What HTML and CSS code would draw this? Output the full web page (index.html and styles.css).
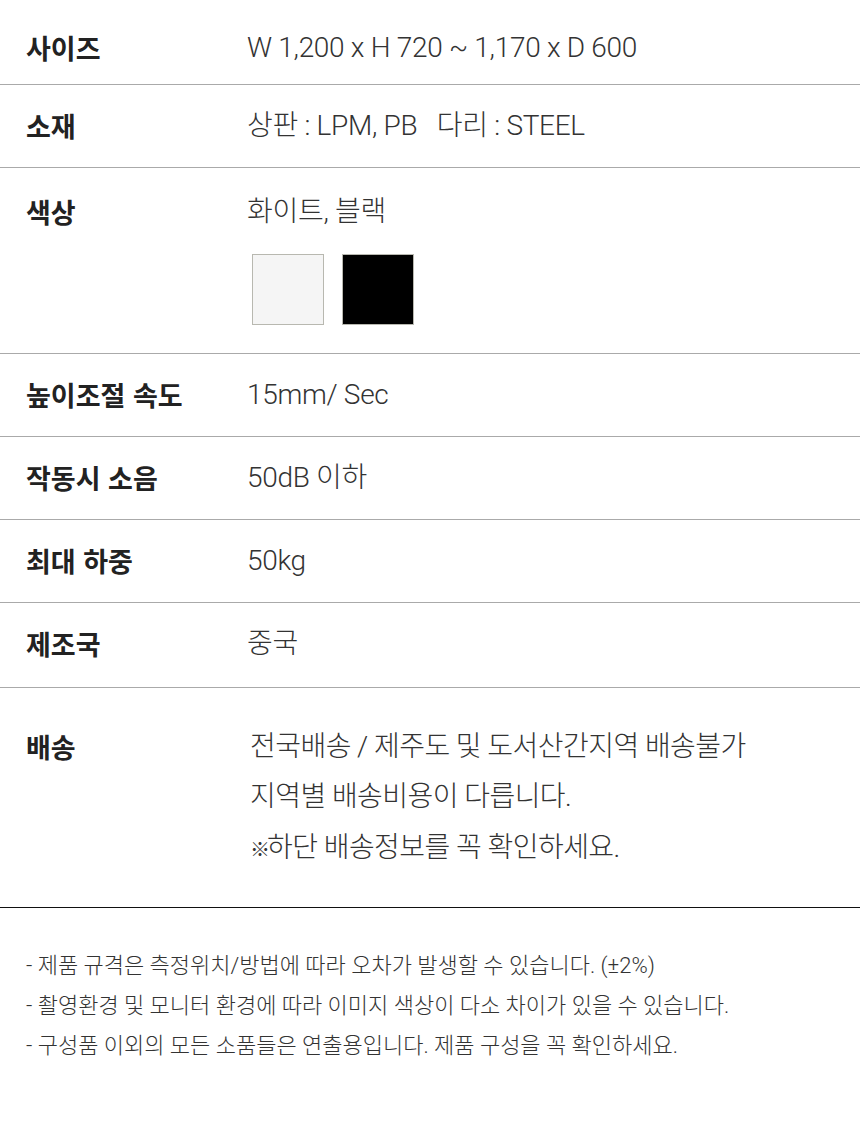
FILE: index.html
```html
<!DOCTYPE html>
<html lang="ko">
<head>
    <meta charset="utf-8">
    <title>제품 정보</title>
    <link rel="stylesheet" href="styles.css">
</head>
<body>
    <div class="spec">
        <div class="spec-row first">
            <div class="spec-label">사이즈</div>
            <div class="spec-value">W 1,200 x H 720 ~ 1,170 x D 600</div>
        </div>
        <div class="spec-row">
            <div class="spec-label">소재</div>
            <div class="spec-value">상판 : LPM, PB &nbsp; 다리 : STEEL</div>
        </div>
        <div class="spec-row color-row">
            <div class="spec-label">색상</div>
            <div class="spec-value">
                화이트, 블랙
                <div class="swatches">
                    <span class="swatch white"></span>
                    <span class="swatch black"></span>
                </div>
            </div>
        </div>
        <div class="spec-row">
            <div class="spec-label">높이조절 속도</div>
            <div class="spec-value">15mm/ Sec</div>
        </div>
        <div class="spec-row">
            <div class="spec-label">작동시 소음</div>
            <div class="spec-value">50dB 이하</div>
        </div>
        <div class="spec-row">
            <div class="spec-label">최대 하중</div>
            <div class="spec-value">50kg</div>
        </div>
        <div class="spec-row origin-row">
            <div class="spec-label">제조국</div>
            <div class="spec-value">중국</div>
        </div>
        <div class="spec-row delivery-row">
            <div class="spec-label">배송</div>
            <div class="spec-value">
                <p>전국배송 / 제주도 및 도서산간지역 배송불가</p>
                <p>지역별 배송비용이 다릅니다.</p>
                <p><span class="mark">※</span>하단 배송정보를 꼭 확인하세요.</p>
            </div>
        </div>
    </div>

    <ul class="notes">
        <li>- 제품 규격은 측정위치/방법에 따라 오차가 발생할 수 있습니다. (±2%)</li>
        <li>- 촬영환경 및 모니터 환경에 따라 이미지 색상이 다소 차이가 있을 수 있습니다.</li>
        <li>- 구성품 이외의 모든 소품들은 연출용입니다. 제품 구성을 꼭 확인하세요.</li>
    </ul>
</body>
</html>
```

FILE: styles.css
```css
body {
    margin: 0;
    background: #fff;
    font-family: Roboto, "Noto Sans CJK KR", sans-serif;
    color: #333;
}
.spec { border-bottom: 1px solid #111; }
.spec-row {
    display: flex;
    align-items: flex-start;
    padding: 22px 0 23px;
    border-top: 1px solid #aaa;
    line-height: 37px;
}
.spec-row.first { border-top: none; padding-top: 29px; padding-bottom: 18px; }
.spec-label {
    width: 221px;
    padding-left: 26px;
    flex-shrink: 0;
    font-family: "Noto Sans CJK KR", sans-serif;
    font-size: 27px;
    font-weight: 700;
    color: #222;
}
.spec-value {
    font-size: 28px;
    font-weight: 300;
    letter-spacing: -0.3px;
}
.color-row { padding-top: 25px; padding-bottom: 28px; }
.swatches { display: flex; gap: 18px; margin-top: 24px; padding-left: 5px; }
.swatch {
    width: 70px;
    height: 69px;
    border: 1px solid #b8b8b0;
}
.swatch.white { background: #f5f5f5; }
.swatch.black { background: #000; }
.origin-row { padding-bottom: 25px; }
.delivery-row { padding-top: 40px; padding-bottom: 38px; }
.delivery-row .spec-value { letter-spacing: -0.55px; }
.delivery-row .spec-value p { margin: 0 0 13px; padding-left: 3px; }
.delivery-row .spec-value p:nth-child(2) { margin-bottom: 14px; }
.delivery-row .spec-value p:last-child { margin-bottom: 0; }
.mark { font-size: 20px; letter-spacing: -5px; margin-right: 2px; }
.notes {
    list-style: none;
    margin: 0;
    padding: 38px 0 0 26px;
    font-size: 22px;
    font-weight: 300;
    line-height: 40px;
    color: #333;
}
```
